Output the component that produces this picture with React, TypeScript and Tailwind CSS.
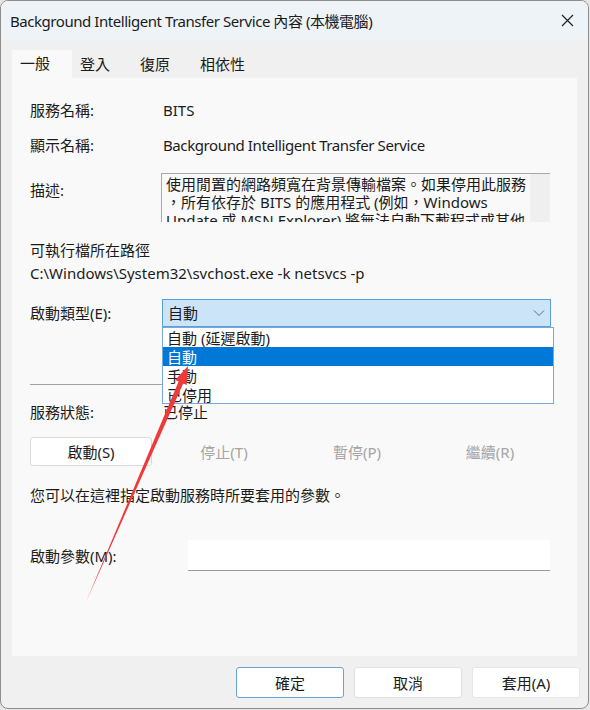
import React from "react";

const F = "font-['Noto_Sans','Noto_Sans_CJK_TC',sans-serif]";

export default function App() {
  return (
    <div className={`relative w-[590px] h-[710px] bg-[#e6e6e6] ${F} text-[15px] text-[#1b1b1b] leading-[20px]`}>
      <div className="w-[589px] h-[709px] border border-[#8e8e8e] rounded-[8px] bg-[#f0f0f0] overflow-hidden flex flex-col">
        {/* title bar */}
        <div className="h-[39px] bg-[#eef3f8] flex items-center justify-between pl-[9px] pr-[14px] shrink-0">
          <span className="text-[15px] tracking-[-0.45px]">Background Intelligent Transfer Service 內容 (本機電腦)</span>
          <svg width="13" height="13" viewBox="0 0 13 13" className="text-[#222]">
            <path d="M1 1 L12 12 M12 1 L1 12" stroke="currentColor" strokeWidth="1.2" />
          </svg>
        </div>
        {/* tabs */}
        <div className="mt-[10px] h-[28px] flex pl-[11px] shrink-0">
          <div className="w-[60px] bg-[#f9f9f9] pl-[8px] pt-[3px]">一般</div>
          <div className="w-[60px] pl-[8px] pt-[4px]">登入</div>
          <div className="w-[60px] pl-[8px] pt-[4px]">復原</div>
          <div className="w-[70px] pl-[8px] pt-[4px]">相依性</div>
        </div>
        {/* panel */}
        <div className="relative ml-[11px] w-[565px] h-[578px] bg-[#f9f9f9] pl-[18px] flex flex-col shrink-0">
          <div className="mt-[22px] h-[20px] flex items-center">
            <span className="w-[133px]">服務名稱:</span>
            <span>BITS</span>
          </div>
          <div className="mt-[15px] h-[20px] flex items-center">
            <span className="w-[133px]">顯示名稱:</span>
            <span className="tracking-[-0.4px]">Background Intelligent Transfer Service</span>
          </div>
          <div className="mt-[18px] h-[49px] flex">
            <span className="w-[131px] pt-[7px]">描述:</span>
            <div className="w-[389px] h-[49px] border-t border-l border-[#a8a8a8] flex overflow-hidden">
              <div className="w-[368px] pl-[4px] pt-[1px] leading-[18px] text-[15px] whitespace-nowrap overflow-hidden">
                <div>使用閒置的網路頻寬在背景傳輸檔案。如果停用此服務</div>
                <div>，所有依存於 BITS 的應用程式 (例如，Windows</div>
                <div>Update 或 MSN Explorer) 將無法自動下載程式或其他</div>
                <div>資訊。</div>
              </div>
              <div className="flex-1 bg-[#efefef]" />
            </div>
          </div>
          <div className="mt-[18px] h-[20px] flex items-center">可執行檔所在路徑</div>
          <div className="mt-[3px] h-[20px] flex items-center">C:\Windows\System32\svchost.exe -k netsvcs -p</div>
          <div className="mt-[16px] h-[28px] flex items-center">
            <span className="w-[132px]">啟動類型(E):</span>
            <div className="w-[389px] h-[28px] bg-[#cce4f7] border border-[#5b9fd8] flex items-center justify-between pl-[5px] pr-[5px]">
              <span>自動</span>
              <svg width="12" height="8" viewBox="0 0 12 8">
                <path d="M1 1.5 L6 6.5 L11 1.5" fill="none" stroke="#6a6a6a" strokeWidth="1" />
              </svg>
            </div>
          </div>
          <div className="mt-[57px] h-[1px] w-[520px] bg-[#a0a0a0]" />
          <div className="mt-[17px] h-[20px] flex items-center">
            <span className="w-[133px]">服務狀態:</span>
            <span>已停止</span>
          </div>
          <div className="mt-[15px] h-[29px] flex gap-[11px]">
            <div className="w-[122px] h-[29px] bg-white border border-[#dadada] rounded-[3px] flex items-center justify-center">啟動(S)</div>
            <div className="w-[122px] h-[29px] flex items-center justify-center text-[#a5a5a5]">停止(T)</div>
            <div className="w-[122px] h-[29px] flex items-center justify-center text-[#a5a5a5]">暫停(P)</div>
            <div className="w-[122px] h-[29px] flex items-center justify-center text-[#a5a5a5]">繼續(R)</div>
          </div>
          <div className="mt-[19px] h-[20px] flex items-center">您可以在這裡指定啟動服務時所要套用的參數。</div>
          <div className="mt-[35px] h-[31px] flex items-center">
            <span className="w-[158px]">啟動參數(M):</span>
            <div className="w-[362px] h-[31px] bg-white border-b border-[#9a9a9a]" />
          </div>

          {/* dropdown list */}
          <div className="absolute left-[150px] top-[249px] w-[392px] h-[77px] bg-white border border-[#78a8dc] flex flex-col">
            <div className="h-[19px] pl-[4px] flex items-center">自動 (延遲啟動)</div>
            <div className="h-[19px] pl-[4px] flex items-center bg-[#0078d7] text-white">自動</div>
            <div className="h-[19px] pl-[4px] flex items-center">手動</div>
            <div className="h-[19px] pl-[4px] flex items-center">已停用</div>
          </div>
        </div>
        {/* bottom buttons */}
        <div className="mt-[11px] flex justify-end gap-[10px] pr-[8px]">
          <div className="w-[108px] h-[31px] bg-white border border-[#6aa3d9] rounded-[3px] flex items-center justify-center">確定</div>
          <div className="w-[108px] h-[31px] bg-white border border-[#e0e0e0] rounded-[3px] flex items-center justify-center">取消</div>
          <div className="w-[108px] h-[31px] bg-white border border-[#e6e6e6] rounded-[3px] flex items-center justify-center">套用(A)</div>
        </div>
      </div>

      {/* red arrow annotation */}
      <svg className="absolute left-0 top-0 pointer-events-none" width="590" height="710" viewBox="0 0 590 710">
        <polygon
          points="86,602 178.6,381.5 175.2,380 188,366 186.6,385 183.2,383.5"
          fill="#ee3a3a"
        />
      </svg>
    </div>
  );
}
